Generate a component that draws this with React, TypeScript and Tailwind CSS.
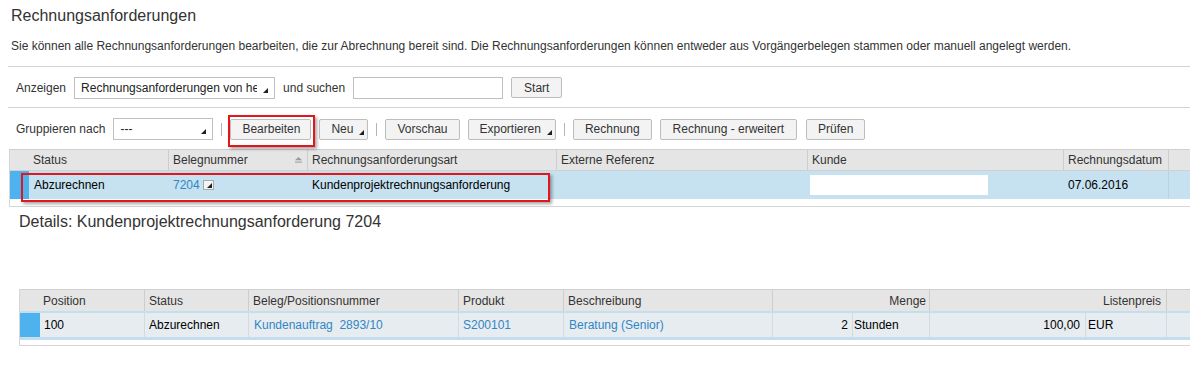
import { FunctionComponent, JSX } from "react";

const Arrow: FunctionComponent<{ className?: string }> = ({
  className = "",
}): JSX.Element => (
  <svg width="5" height="5" viewBox="0 0 5 5" className={className}>
    <polygon points="5,0 5,5 0,5" fill="#1f1f1f" />
  </svg>
);

const Btn: FunctionComponent<{ label: string; menu?: boolean; pad?: string }> = ({
  label,
  menu,
  pad = "px-[11px]",
}): JSX.Element => (
  <div
    className={`relative h-[21px] flex flex-row items-center shrink-0 border border-[#bdbdbd] rounded-[2px] bg-[#f3f3f3] text-[#333] whitespace-nowrap ${
      menu ? "pl-[11px] pr-[3px] gap-[6px]" : pad
    }`}
  >
    <span>{label}</span>
    {menu && <Arrow className="self-end mb-[4px]" />}
  </div>
);

const Sep = (): JSX.Element => (
  <div className="w-px h-[13px] bg-[#b5b5b5] mx-[8px] shrink-0" />
);

const Select: FunctionComponent<{ value: string; width: string }> = ({
  value,
  width,
}): JSX.Element => (
  <div
    className={`relative h-[22px] flex flex-row border border-[#bfbfbf] bg-white text-[#222] shrink-0 ${width}`}
  >
    <div className="flex-1 overflow-hidden whitespace-nowrap pl-[6px] flex items-center">
      {value}
    </div>
    <Arrow className="self-end mb-[5px] ml-[6px] mr-[6px] shrink-0" />
  </div>
);

const SortIcon = (): JSX.Element => (
  <svg width="7" height="6" viewBox="0 0 7 6" className="ml-auto mr-[5px]">
    <polygon points="3.5,0 7,3.2 0,3.2" fill="#9a9a9a" />
    <rect x="0" y="4.6" width="7" height="1" fill="#9a9a9a" />
  </svg>
);

const App = (): JSX.Element => {
  return (
    <div className="relative w-[1190px] h-[368px] bg-white overflow-hidden font-['Liberation_Sans',Arial,sans-serif] text-[12px] text-[#333]">
      <div className="pl-[11px] pt-[6px] text-[16px] leading-[20px] text-[#333]">
        Rechnungsanforderungen
      </div>
      <div className="pl-[11px] mt-[12px] leading-[16px] text-[#333] whitespace-nowrap">
        Sie können alle Rechnungsanforderungen bearbeiten, die zur Abrechnung
        bereit sind. Die Rechnungsanforderungen können entweder aus
        Vorgängerbelegen stammen oder manuell angelegt werden.
      </div>
      <div className="ml-[8px] mt-[12px] h-px bg-[#d2d2d2]" />

      {/* Anzeigen */}
      <div className="flex flex-row items-center gap-[8px] pl-[16px] pt-[9px] pb-[8px] h-[40px]">
        <span>Anzeigen</span>
        <Select value="Rechnungsanforderungen von heute" width="w-[201px]" />
        <span>und suchen</span>
        <div className="w-[150px] h-[22px] border border-[#bfbfbf] bg-white" />
        <Btn label="Start" pad="px-[12px]" />
      </div>
      <div className="ml-[8px] h-px bg-[#d2d2d2]" />

      {/* Gruppieren */}
      <div className="flex flex-row items-center pl-[16px] pt-[10px] h-[41px] pb-[9px]">
        <span className="mr-[8px]">Gruppieren nach</span>
        <Select value="---" width="w-[100px]" />
        <Sep />
        <div className="relative">
          <Btn label="Bearbeiten" pad="pl-[11px] pr-[10px]" />
          <div className="absolute left-[-2px] right-[-4px] top-[-4px] bottom-[-7px] border-2 border-[#e3161b] shadow-[2px_2px_3px_rgba(0,0,0,0.35)]" />
        </div>
        <div className="ml-[8px]">
          <Btn label="Neu" menu />
        </div>
        <Sep />
        <Btn label="Vorschau" />
        <div className="ml-[8px]">
          <Btn label="Exportieren" menu />
        </div>
        <Sep />
        <Btn label="Rechnung" />
        <div className="ml-[8px]">
          <Btn label="Rechnung - erweitert" pad="px-[12px]" />
        </div>
        <div className="ml-[9px]">
          <Btn label="Prüfen" />
        </div>
      </div>

      {/* Tabelle Rechnungsanforderungen */}
      <div className="ml-[9px] border-l border-b border-[#d6d6d6] pb-[7px]">
        <div className="flex flex-row h-[22px] bg-[#e5e5e5] border-t border-b border-[#d0d0d0] text-[#333]">
          <div className="w-[19px] shrink-0" />
          <div className="w-[139px] shrink-0 pl-[4px] flex items-center">Status</div>
          <div className="w-[139px] shrink-0 border-l border-[#cdcdcd] pl-[4px] flex items-center">
            Belegnummer
            <SortIcon />
          </div>
          <div className="w-[249px] shrink-0 border-l border-[#cdcdcd] pl-[4px] flex items-center">
            Rechnungsanforderungsart
          </div>
          <div className="w-[251px] shrink-0 border-l border-[#cdcdcd] pl-[4px] flex items-center">
            Externe Referenz
          </div>
          <div className="w-[256px] shrink-0 border-l border-[#cdcdcd] pl-[4px] flex items-center">
            Kunde
          </div>
          <div className="w-[105px] shrink-0 border-l border-[#cdcdcd] pl-[4px] flex items-center">
            Rechnungsdatum
          </div>
          <div className="flex-1 border-l border-[#cdcdcd]" />
        </div>
        <div className="relative flex flex-row h-[28px] bg-[#c6e1f0] text-black">
          <div className="w-[19px] shrink-0 bg-[#4db2ee]" />
          <div className="w-[139px] shrink-0 pl-[5px] flex items-center">Abzurechnen</div>
          <div className="w-[139px] shrink-0 pl-[5px] flex items-center gap-[3px]">
            <span className="text-[#3186c6]">7204</span>
            <div className="w-[11px] h-[10px] border border-[#a9a9a9] bg-[#f4f4f4] flex items-end justify-end pr-[1px] pb-[1px]">
              <Arrow />
            </div>
          </div>
          <div className="w-[249px] shrink-0 pl-[5px] flex items-center">
            Kundenprojektrechnungsanforderung
          </div>
          <div className="w-[251px] shrink-0" />
          <div className="w-[256px] shrink-0 flex items-center pl-[3px]">
            <div className="w-[178px] h-[20px] bg-white" />
          </div>
          <div className="w-[105px] shrink-0 pl-[5px] flex items-center">07.06.2016</div>
          <div className="flex-1 border-l border-[#b9d3e2]" />
          <div className="absolute left-[11px] top-[2px] w-[529px] h-[29px] border-2 border-[#e3161b] shadow-[2px_2px_3px_rgba(0,0,0,0.35)]" />
        </div>
      </div>

      <div className="pl-[19px] mt-[5px] text-[16px] leading-[20px] text-[#333]">
        Details: Kundenprojektrechnungsanforderung 7204
      </div>

      {/* Tabelle Positionen */}
      <div className="ml-[19px] mt-[57px] border-l border-b border-[#d6d6d6] pb-[5px]">
        <div className="flex flex-row h-[22px] bg-[#e5e5e5] border-t border-[#d0d0d0] text-[#333]">
          <div className="w-[20px] shrink-0" />
          <div className="w-[104px] shrink-0 pl-[3px] flex items-center">Position</div>
          <div className="w-[104px] shrink-0 border-l border-[#cdcdcd] pl-[4px] flex items-center">Status</div>
          <div className="w-[210px] shrink-0 border-l border-[#cdcdcd] pl-[4px] flex items-center">
            Beleg/Positionsnummer
          </div>
          <div className="w-[105px] shrink-0 border-l border-[#cdcdcd] pl-[4px] flex items-center">Produkt</div>
          <div className="w-[209px] shrink-0 border-l border-[#cdcdcd] pl-[4px] flex items-center">
            Beschreibung
          </div>
          <div className="w-[157px] shrink-0 border-l border-[#cdcdcd] pr-[3px] flex items-center justify-end">
            Menge
          </div>
          <div className="w-[237px] shrink-0 border-l border-[#cdcdcd] pr-[5px] flex items-center justify-end">
            Listenpreis
          </div>
          <div className="flex-1 border-l border-[#cdcdcd]" />
        </div>
        <div className="flex flex-row h-[29px] bg-[#e7ecf0] border-t-2 border-b-[3px] border-[#c3dfef] text-black">
          <div className="w-[20px] shrink-0 bg-[#4db2ee]" />
          <div className="w-[104px] shrink-0 pl-[4px] flex items-center">100</div>
          <div className="w-[104px] shrink-0 border-l border-[#d3dbe1] pl-[4px] flex items-center">
            Abzurechnen
          </div>
          <div className="w-[210px] shrink-0 border-l border-[#d3dbe1] pl-[5px] flex items-center text-[#3186c6] whitespace-pre">
            {"Kundenauftrag  2893/10"}
          </div>
          <div className="w-[105px] shrink-0 border-l border-[#d3dbe1] pl-[4px] flex items-center text-[#3186c6]">
            S200101
          </div>
          <div className="w-[209px] shrink-0 border-l border-[#d3dbe1] pl-[5px] flex items-center text-[#3186c6]">
            Beratung (Senior)
          </div>
          <div className="w-[80px] shrink-0 border-l border-[#d3dbe1] pr-[4px] flex items-center justify-end">2</div>
          <div className="w-[77px] shrink-0 border-l border-[#d3dbe1] pl-[1px] flex items-center">Stunden</div>
          <div className="w-[156px] shrink-0 border-l border-[#d3dbe1] pr-[5px] flex items-center justify-end">
            100,00
          </div>
          <div className="w-[81px] shrink-0 border-l border-[#d3dbe1] pl-[2px] flex items-center">EUR</div>
          <div className="flex-1 border-l border-[#d3dbe1]" />
        </div>
      </div>
    </div>
  );
};

export default App;
